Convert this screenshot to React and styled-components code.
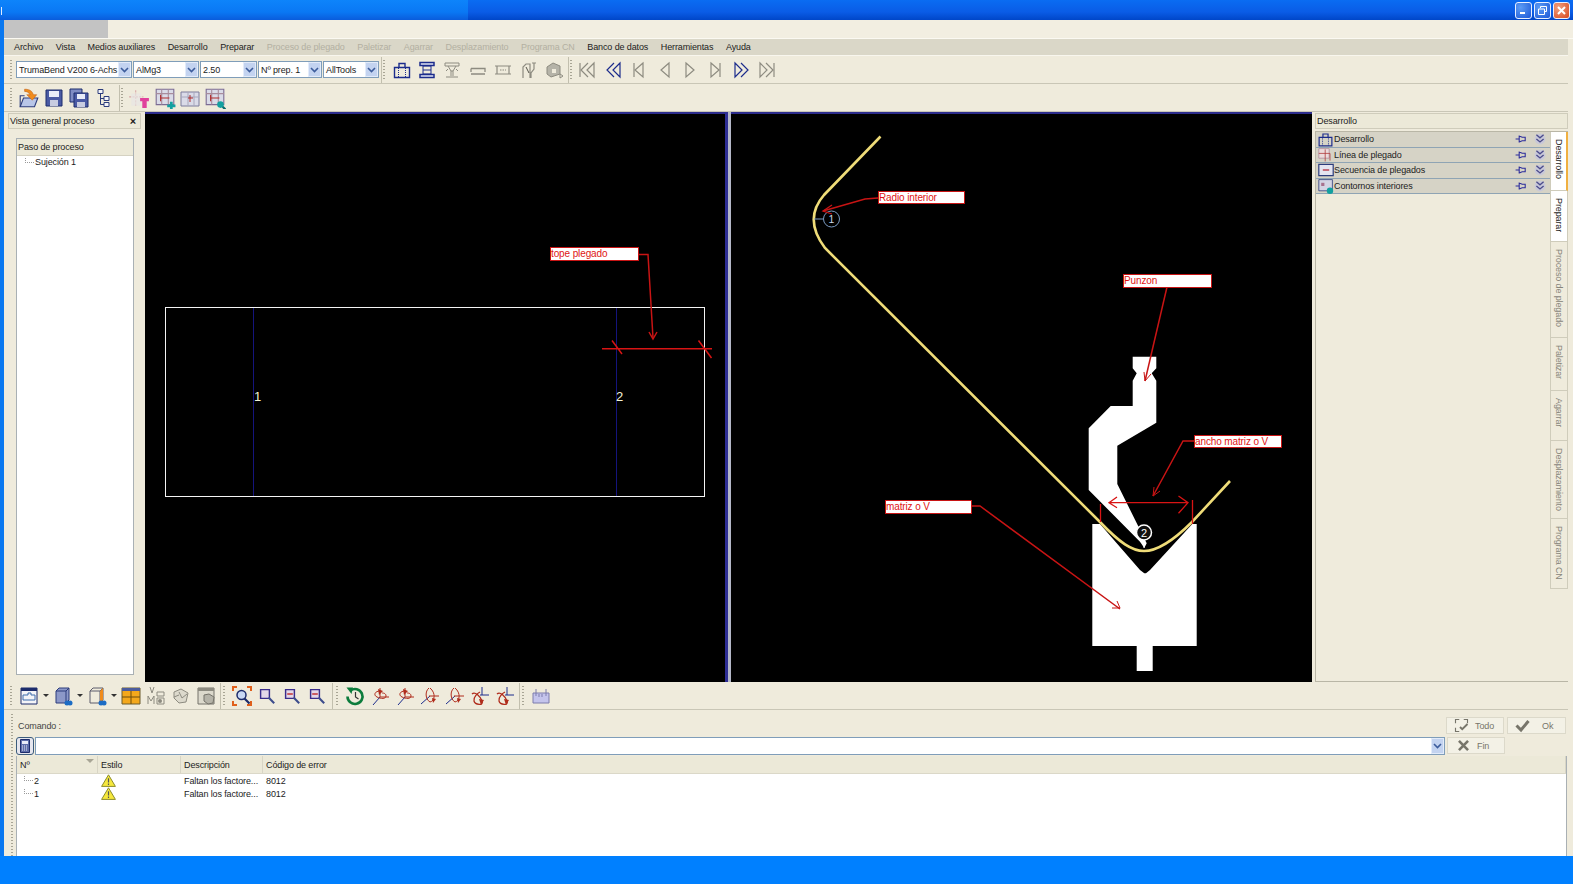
import styled, { createGlobalStyle } from "styled-components";

const GlobalStyle = createGlobalStyle`
  html, body {
    margin: 0;
    padding: 0;
    background: #ece9d8;
  }
  * {
    box-sizing: border-box;
  }
`;

const Page = styled.div`
  width: 1573px;
  height: 884px;
  display: flex;
  flex-direction: column;
  overflow: hidden;
  font-family: "Liberation Sans", Arial, sans-serif;
  font-size: 9px;
  letter-spacing: -0.12px;
  color: #1c1c1c;
`;

const TitleBar = styled.header`
  height: 20px;
  flex: none;
  display: flex;
  align-items: center;
  background: linear-gradient(#0a6cf2, #0a5ce6 60%, #0046c8);
`;

const TitleLeft = styled.div`
  width: 468px;
  height: 100%;
  padding: 7px 0 0 1px;
  background: linear-gradient(#0d84fb, #0a78f4 60%, #0a5cdc);
`;

const Caret = styled.div`
  width: 1px;
  height: 8px;
  background: #dfeaff;
`;

const WinButtons = styled.div`
  margin-left: auto;
  display: flex;
  gap: 2px;
  padding-right: 3px;
`;

const WinButton = styled.div`
  width: 17px;
  height: 17px;
  border: 1px solid #e8f0ff;
  border-radius: 3px;
  display: flex;
  align-items: center;
  justify-content: center;
  background: ${(p) =>
    p.$close
      ? "radial-gradient(circle at 30% 30%, #f0a080, #d8481c)"
      : "radial-gradient(circle at 30% 30%, #5c9cf4, #1c58d8)"};
`;

const Client = styled.div`
  flex: 1;
  min-height: 0;
  display: flex;
  flex-direction: column;
  border-left: 4px solid #0a78f0;
  background: #efebdc;
`;

const TabStrip = styled.div`
  height: 19px;
  flex: none;
  display: flex;
  background: #f2eee1;
  border-bottom: 1px solid #fbf9f2;
`;

const GrayTab = styled.div`
  width: 104px;
  background: #c3c3c3;
`;

const MenuBar = styled.nav`
  height: 17px;
  flex: none;
  width: 1564px;
  display: flex;
  align-items: center;
  gap: 12.6px;
  padding-left: 10px;
  background: #dad7c8;
  border-bottom: 1px solid #f8f6ee;
`;

const MenuItem = styled.span`
  color: ${(p) => (p.$off ? "#b3b0a2" : "#1c1c1c")};
  white-space: nowrap;
`;

const ToolRow = styled.div`
  height: 28px;
  flex: none;
  width: 1564px;
  display: flex;
  align-items: center;
  padding-left: 6px;
  border-bottom: 1px solid #c9c6b6;
`;

const Grip = styled.div`
  width: 2px;
  height: 20px;
  flex: none;
  margin: 0 4px 0 0;
  background: repeating-linear-gradient(#a8a595 0 1px, transparent 1px 3px);
`;

const Sep = styled.div`
  width: 1px;
  height: 26px;
  flex: none;
  margin: 0 ${(p) => p.$gap}px;
  background: #c2bfae;
`;

const Combo = styled.div`
  width: ${(p) => p.$w}px;
  height: 17px;
  flex: none;
  margin-right: 1px;
  display: flex;
  align-items: center;
  justify-content: space-between;
  padding-left: 2px;
  background: #fff;
  border: 1px solid #7f9db9;
  white-space: nowrap;
  overflow: hidden;
`;

const DropArrow = styled.div`
  width: 13px;
  height: 100%;
  flex: none;
  display: flex;
  align-items: center;
  justify-content: center;
  background: #c3d3f0;
  border: 1px solid #e2ebfa;
`;

const Slot = styled.div`
  width: ${(p) => p.$w || 25.4}px;
  height: 24px;
  flex: none;
  display: flex;
  align-items: center;
  justify-content: center;
`;

const Main = styled.main`
  height: 570px;
  flex: none;
  display: flex;
`;

const Side = styled.aside`
  width: 141px;
  flex: none;
  display: flex;
  flex-direction: column;
  padding: 1px 4px 7px 4px;
`;

const PanelHead = styled.div`
  height: 16px;
  flex: none;
  display: flex;
  align-items: center;
  justify-content: space-between;
  padding: 0 4px 1px 1px;
  background: #ece9d8;
  border: 1px solid #cfccbb;
`;

const Close = styled.span`
  font-size: 11px;
  font-weight: bold;
`;

const Tree = styled.div`
  flex: 1;
  margin: 9px 7px 0 8px;
  display: flex;
  flex-direction: column;
  background: #fff;
  border: 1px solid #a9b0b4;
`;

const TreeHead = styled.div`
  height: 17px;
  flex: none;
  display: flex;
  align-items: center;
  padding: 0 0 1px 1px;
  background: #ece9d8;
  border-bottom: 1px solid #d5d2c2;
`;

const TreeRow = styled.div`
  height: 12px;
  display: flex;
  align-items: center;
  padding-left: 8px;
`;

const Dots = styled.span`
  width: 9px;
  height: 5px;
  margin: -4px 1px 0 0;
  border-left: 1px dotted #9a9a9a;
  border-bottom: 1px dotted #9a9a9a;
`;

const Canvas = styled.svg`
  display: block;
  flex: none;
  width: ${(p) => p.$w}px;
  height: 570px;
  background: #000;
  border-top: 2px solid #2c2c8c;
`;

const Splitter = styled.div`
  width: 6px;
  flex: none;
  background: linear-gradient(90deg, #2e2e94 0 3px, #b4b8c8 3px 6px);
`;

const RightPanel = styled.aside`
  flex: 1;
  min-width: 0;
  display: flex;
  flex-direction: column;
  padding: 1px 5px 0 3px;
`;

const RightBody = styled.div`
  flex: 1;
  display: flex;
  margin-top: 2px;
  border: 1px solid #b9b6a6;
  border-right: none;
`;

const Rows = styled.div`
  flex: 1;
  min-width: 0;
`;

const FeatureRow = styled.div`
  height: 15.6px;
  display: flex;
  align-items: center;
  gap: 0;
  padding-left: 1px;
  background: #d6d3c6;
  border-bottom: 1px solid #8fa4b4;
`;

const RowTail = styled.div`
  margin-left: auto;
  display: flex;
  gap: 7px;
  padding-right: 4px;
`;

const VTabs = styled.div`
  width: 18px;
  flex: none;
  display: flex;
  flex-direction: column;
`;

const VTab = styled.div`
  height: ${(p) => p.$h}px;
  writing-mode: vertical-rl;
  display: flex;
  align-items: center;
  justify-content: flex-start;
  padding-top: 7px;
  white-space: nowrap;
  color: ${(p) => (p.$on ? "#1c1c1c" : "#87857a")};
  background: ${(p) => (p.$on ? "#fff" : "#efebdc")};
  border-bottom: 1px solid #cfccbb;
  border-left: 1px solid #cfccbb;
  border-right: ${(p) => (p.$active ? "2px solid #f0b040" : "1px solid #cfccbb")};
`;

const CommandArea = styled.section`
  flex: 1;
  min-height: 0;
  display: flex;
  width: 1563px;
  padding-left: 7px;
`;

const GripColumn = styled.div`
  width: 2px;
  margin: 4px 3px 0 0;
  background: repeating-linear-gradient(#a8a595 0 1px, transparent 1px 3px);
`;

const CommandBody = styled.div`
  flex: 1;
  min-width: 0;
  display: flex;
  flex-direction: column;
`;

const CommandTop = styled.div`
  height: 27px;
  flex: none;
  display: flex;
  align-items: flex-start;
  padding: 7px 1px 0 2px;
`;

const CommandLabel = styled.span`
  margin-right: auto;
  padding-top: 4px;
  color: #444;
`;

const ActionButton = styled.div`
  width: ${(p) => p.$w || 58}px;
  height: 17px;
  margin-left: ${(p) => p.$ml || 0}px;
  display: flex;
  align-items: center;
  gap: ${(p) => p.$gap}px;
  padding-left: ${(p) => p.$pad || 7}px;
  color: #77756a;
  background: #f3f1e6;
  border: 1px solid #dcd9ca;
`;

const CommandInputRow = styled.div`
  height: 18px;
  flex: none;
  display: flex;
  align-items: stretch;
`;

const CalcButton = styled.div`
  width: 18px;
  flex: none;
  margin-right: 1px;
  display: flex;
  align-items: center;
  justify-content: center;
  background: #e6e6ee;
  border: 1px solid #3c5c7c;
  border-radius: 3px;
`;

const CommandInput = styled.div`
  flex: 1;
  display: flex;
  justify-content: flex-end;
  background: #fff;
  border: 1px solid #7f9db9;
`;

const FinSpace = styled.div`
  width: 122px;
  flex: none;
  padding-left: 2px;
`;

const Table = styled.div`
  flex: 1;
  min-height: 0;
  margin-top: 1px;
  background: #fff;
  border-left: 1px solid #a9b0b4;
  border-right: 1px solid #a9b0b4;
`;

const TableRow = styled.div`
  display: grid;
  grid-template-columns: 81px 83px 82px 1fr;
  height: ${(p) => p.$h || 13}px;
  align-items: center;
`;

const TableHead = styled(TableRow)`
  background: #ece9d8;
  border-bottom: 1px solid #dbd8c8;
`;

const HeadCell = styled.div`
  position: relative;
  height: 100%;
  display: flex;
  align-items: center;
  padding-left: 3px;
  border-right: 1px solid #d8d5c5;
`;

const SortMark = styled.span`
  position: absolute;
  right: 3px;
  top: 3px;
  border: 4px solid transparent;
  border-top: 4px solid #a8a595;
`;

const Cell = styled.div`
  display: flex;
  align-items: center;
  padding-left: ${(p) => p.$pad || 3}px;
  white-space: nowrap;
`;

const StatusBar = styled.footer`
  height: 28px;
  flex: none;
  background: #0080ff;
`;

const IconSvg = styled.svg`
  display: block;
  flex: none;
`;

const Ico = ({ s = 20, children }) => (
  <IconSvg width={s} height={s} viewBox="0 0 20 20" fill="none">
    {children}
  </IconSvg>
);

const NAVY = "#1c2c8c";
const GREY = "#8d8b80";
const RED = "#b02c1c";

const Chevron = ({ c = "#3c5c9c" }) => (
  <svg width="9" height="6" viewBox="0 0 9 6">
    <path d="M1 1l3.5 3.5L8 1" stroke={c} strokeWidth="1.6" fill="none" />
  </svg>
);

const Nav = ({ dir = 1, bar, count = 1, on }) => {
  const c = on ? NAVY : GREY;
  return (
    <Ico>
      <g transform={dir < 0 ? "translate(20 0) scale(-1 1)" : undefined} stroke={c} strokeWidth="1.2" fill="none">
        <path d={count === 2 ? "M4 3l7 7-7 7z" : "M6 3l8 7-8 7z"} />
        {count === 2 && <path d="M10 3l7 7-7 7" />}
        {bar && <path d={count === 2 ? "M18 3v14" : "M15 3v14"} />}
      </g>
    </Ico>
  );
};

const SheetIcon = ({ s = 20 }) => (
  <Ico s={s}>
    <path d="M2.500 7.500h15v10h-15zM7 7.500V3.500h6v4" stroke={NAVY} strokeWidth="1.400" />
    <path d="M6.500 8v9M13.500 8v9" stroke={NAVY} strokeDasharray="1 1" />
  </Ico>
);
const press = (
  <Ico>
    <path d="M3 2.500h14v3H3zM3 14.500h14v3H3z" stroke={NAVY} strokeWidth="1.500" fill="#dfe3f4" />
    <path d="M6 6h8v8H6zM6 10h8" stroke={NAVY} />
  </Ico>
);
const anvil = (
  <Ico>
    <path d="M3 3h14v3H3zM6 6l3 5h2l3-5M9 11v5M11 11v5M4 17h12" stroke={GREY} />
    <path d="M6 9l-2 2M14 9l2 2" stroke={GREY} />
  </Ico>
);
const rail = (
  <Ico>
    <path d="M3 8.500h14v3.500M3 12V8.500M3 14h14" stroke={GREY} strokeWidth="1.300" />
  </Ico>
);
const slotIcon = (
  <Ico>
    <path d="M2 6h16M4 6v8h12V6M2 14h16" stroke={GREY} strokeWidth="1.200" />
    <path d="M7 10h6" stroke={GREY} strokeDasharray="1.500 1" />
  </Ico>
);
const machine = (
  <Ico>
    <path d="M4 18V7l3-3h4v14M13 3h4M15 3v6l-3 4v5" stroke={GREY} strokeWidth="1.200" />
    <path d="M7 7l3 6" stroke="#55534a" />
  </Ico>
);
const ncFolder = (
  <Ico>
    <path d="M3 7l6-4 7 3v8l-9 3-4-3z" fill="#b5b3a8" stroke={GREY} />
    <path d="M8 9h4v4H8z" fill="#efebdc" />
    <path d="M16 14l3 2-3 2z" stroke={GREY} />
  </Ico>
);

const openFolder = (
  <Ico s={22}>
    <path d="M2 18l3-8h13l-3 8z" fill="#b9c6e8" stroke="#2c3c7c" />
    <path d="M2 18V8h4" stroke="#2c3c7c" />
    <path d="M6 2c5 0 7 2 8 5h3l-4 5-5-5h3c-1-2-3-3-5-3z" fill="#f08c1c" stroke="#c05c0c" strokeWidth=".5" />
  </Ico>
);
const floppy = (
  <Ico>
    <path d="M2 2h16v16H2z" fill="#4a5aa4" stroke="#1c2c6c" />
    <path d="M5 3h10v6H5z" fill="#e8ecf8" />
    <path d="M6 12h8v6H6z" fill="#c8cce0" />
  </Ico>
);
const floppies = (
  <Ico>
    <path d="M1 1h12v13H1z" fill="#7f8cc4" stroke="#1c2c6c" />
    <path d="M5 5h14v14H5z" fill="#4a5aa4" stroke="#1c2c6c" />
    <path d="M8 6h8v5H8z" fill="#e8ecf8" />
    <path d="M8 14h8v5H8z" fill="#c8cce0" />
  </Ico>
);
const treeIcon = (
  <Ico>
    <path d="M3 1.500h5v4H3zM9 8.500h5v4H9zM9 14.500h5v4H9z" fill="#f4f4f8" stroke="#2c3c7c" />
    <path d="M5.500 5.500V16.500H9M5.500 10.500H9" stroke="#2c3c7c" />
  </Ico>
);
const pinkT = (
  <Ico s={22}>
    <path d="M1 9h13M7 3v14" stroke="#d8a8a8" strokeDasharray="2 1" />
    <path d="M3 6h9v11H3z" fill="#e8e6e4" opacity=".7" />
    <path d="M11 10h8v3h-2v6h-4v-6h-2z" fill="#e0409c" />
  </Ico>
);
const gridBadge = (badge) => (
  <Ico s={22}>
    <path d="M2 2h16v14H2z" fill="#dadbe8" stroke="#7c6c94" />
    <path d="M2 6h16M7 2v14M13 2v14" stroke="#a88c9c" />
    <path d="M6 7v6M6 10h8" stroke="#b02c2c" />
    {badge === "plus" && <path d="M12 16h2.500v-2.500h2.500V16h2.500v2.500H17V21h-2.500v-2.500H12z" fill="#12a0a0" />}
    {badge === "lens" && <circle cx="15" cy="16" r="3" fill="#12a0a0" />}
    {badge === "lens" && <path d="M17 18l3 3" stroke="#0c6c6c" strokeWidth="2" />}
  </Ico>
);
const gridPlain = (
  <Ico>
    <path d="M1 4h18v14H1z" fill="#dadbe8" stroke="#7c7c9c" />
    <path d="M1 9h18M8 4v14M14 4v14" stroke="#a8a8bc" />
    <path d="M10 7v7M8 10h5" stroke="#b02c2c" />
  </Ico>
);

const windowIcon = (
  <Ico>
    <path d="M2 2h16v16H2z" fill="#f4f4f8" stroke="#1c2c6c" />
    <path d="M2 2h16v3H2z" fill="#1c2c6c" />
    <path d="M4 9h5V7h3v2h4v5H4z" stroke="#3c6cac" />
  </Ico>
);
const cube = (
  <Ico>
    <path d="M3 5l3-3h10v12l-3 3H3z" fill="#8c98c8" stroke="#2c3c7c" />
    <path d="M3 5h10v12M13 5l3-3" stroke="#2c3c7c" />
    <circle cx="14" cy="17" r="2.500" fill="#1c6cc4" />
    <circle cx="17" cy="17" r="2.500" fill="#1c6cc4" />
  </Ico>
);
const wireCube = (
  <Ico>
    <path d="M3 5l3-3h10v12l-3 3H3zM3 5h10v12M13 5l3-3" stroke="#5c5c6c" />
    <path d="M13 5l3-3v12l-3 3z" fill="#f08c1c" />
    <circle cx="14" cy="17" r="2.500" fill="#1c6cc4" />
    <circle cx="17" cy="17" r="2.500" fill="#1c6cc4" />
  </Ico>
);
const orangeGrid = (
  <Ico>
    <path d="M1 2h18v16H1z" fill="#f4a81c" stroke="#6c5c2c" />
    <path d="M1 2h18v3H1z" fill="#4c5c9c" />
    <path d="M10 5v13M1 11h18" stroke="#6c4c0c" />
  </Ico>
);
const vmIcon = (
  <Ico>
    <path d="M4 1l2 6 2-6M2 18v-8l3 5 3-5v8" stroke={GREY} />
    <path d="M11 6h7v4h-7zM11 12h7v6h-7z" stroke={GREY} />
    <circle cx="14" cy="15" r="2" fill={GREY} />
  </Ico>
);
const greyShape = (
  <Ico>
    <path d="M3 6l7-3 7 4-2 9-7 1-5-5z" stroke={GREY} fill="#dcd9cc" />
    <path d="M8 6l3 6 5-4M3 11l5-2" stroke={GREY} />
  </Ico>
);
const greyWindow = (
  <Ico>
    <path d="M2 2h16v16H2z" fill="#dcd9cc" stroke="#75736a" />
    <path d="M2 2h16v3H2z" fill="#8d8b80" />
    <path d="M8 9l5-1 5 3-1 6-5 1-4-3z" fill="#b5b3a8" stroke="#75736a" />
  </Ico>
);
const zoomAll = (
  <Ico>
    <path d="M1 5V1h4M15 1h4v4M1 15v4h4M19 15v4h-4" stroke="#e0601c" strokeWidth="2" />
    <circle cx="9.500" cy="9" r="4.500" fill="#c8d8f4" stroke="#1c2c6c" strokeWidth="1.500" />
    <path d="M12.500 12.500l5 5" stroke="#1c2c6c" strokeWidth="2.200" />
  </Ico>
);
const lens = (mark) => (
  <Ico s={16}>
    <path d="M2 2h11v11H2z" fill="#e4d8e8" stroke="#3a2c8c" strokeWidth="1.800" />
    <path d="M12 12l7 7" stroke="#3c4c8c" strokeWidth="2.600" />
    <path d={mark} stroke="#c02c2c" strokeWidth="1.800" />
  </Ico>
);
const historyIcon = (
  <Ico>
    <path d="M5.500 4.500a7.500 7.500 0 1 1-3 6" stroke="#0c7c3c" strokeWidth="2.600" />
    <path d="M1.500 1.500h6.500l-1.500 6.500z" fill="#0c7c3c" />
    <path d="M10.500 6v5l3 2" stroke="#333" strokeWidth="1.200" />
  </Ico>
);
// rotation axis buttons: navy axis, red turning direction
const axisLoop = (
  <>
    <path d="M10 2v9M10 11h9" stroke={RED} />
    <path d="M10 11l-7 8" stroke={NAVY} />
    <path d="M10 5c-5 0-7 4-3 6s9 2 9-1-3-3-4-3" stroke={RED} />
    <path d="M8 3l5 2-4 4z" fill={RED} />
  </>
);
const axisRing = (
  <>
    <path d="M1 18l9-8" stroke={NAVY} />
    <path d="M9 10h10" stroke={RED} />
    <path d="M9 2c-4 3-4 11 1 14 5-1 6-9 0-14" stroke={RED} />
    <path d="M12 12l4 1-3 4z" fill={RED} />
  </>
);
const axisEight = (
  <>
    <path d="M10 9h9M12 1v8" stroke={NAVY} />
    <path d="M2 8c3-3 8 2 10 7s-7 4-8 0 4-8 6-9" stroke={RED} strokeWidth="1.300" />
    <path d="M9 13l5 1-3 5z" fill={RED} />
  </>
);
const ruler = (
  <Ico>
    <path d="M2 7h16v10H2z" fill="#c4c4ec" stroke="#7c7cac" />
    <path d="M5 3v7M15 3v7M8 8v3M11 8v3" stroke="#7c7cac" />
  </Ico>
);
const warning = (
  <IconSvg width="15" height="13" viewBox="0 0 15 13">
    <path d="M7.500.8L14.400 12.400H.6z" fill="#f6e83c" stroke="#8c8c2c" />
    <path d="M7.500 4.200v4.400M7.500 9.600v1.400" stroke="#555" strokeWidth="1.200" />
  </IconSvg>
);

const Pin = () => (
  <Ico s={12}>
    <path d="M1 10h6M7 4v12M7 5l5 2h5v6h-5l-5 2" stroke="#2c2c9c" strokeWidth="1.800" />
  </Ico>
);
const DoubleDown = () => (
  <Ico s={12}>
    <circle cx="10" cy="10" r="9" fill="#c8c8d8" />
    <path d="M4 3l6 5 6-5M4 10l6 5 6-5" stroke="#4c4c8c" strokeWidth="2.200" />
  </Ico>
);

const Caret3 = () => (
  <Slot $w={9}>
    <svg width="6" height="3"><path d="M0 0h6L3 3z" fill="#333" /></svg>
  </Slot>
);

const featureIcons = [
  <SheetIcon key="d" s={17} />,
  <Ico key="l" s={16}>
    <path d="M1 2h13v12H1z" fill="#ecdcdc" stroke="#b08c9c" />
    <path d="M1 8h14M9 3v15M15 8v9" stroke="#b03c3c" />
  </Ico>,
  <Ico key="s" s={16}>
    <path d="M1 3h18v14H1z" fill="#e4e4f0" stroke="#2c3c7c" strokeWidth="1.500" />
    <path d="M6 10h8" stroke="#b01c2c" strokeWidth="1.500" />
  </Ico>,
  <Ico key="c" s={16}>
    <path d="M1 2h17v14H1z" fill="#d4d4e4" stroke="#2c3c7c" />
    <path d="M4 6h4v4H4z" fill="#a8708c" />
    <circle cx="15" cy="16" r="4" fill="#12a0a0" />
  </Ico>,
];

const features = ["Desarrollo", "Línea de plegado", "Secuencia de plegados", "Contornos interiores"];

const menu = [
  ["Archivo"],
  ["Vista"],
  ["Medios auxiliares"],
  ["Desarrollo"],
  ["Preparar"],
  ["Proceso de plegado", true],
  ["Paletizar", true],
  ["Agarrar", true],
  ["Desplazamiento", true],
  ["Programa CN", true],
  ["Banco de datos"],
  ["Herramientas"],
  ["Ayuda"],
];

const combos = [
  ["TrumaBend V200 6-Achs", 116],
  ["AlMg3", 66],
  ["2.50", 57],
  ["Nº prep. 1", 64],
  ["AllTools", 56],
];

const tabs = [
  ["Desarrollo", 59, true, true],
  ["Preparar", 51, true],
  ["Proceso de plegado", 96],
  ["Paletizar", 53],
  ["Agarrar", 50],
  ["Desplazamiento", 78],
  ["Programa CN", 70],
];

const Callout = ({ x, y, w, h = 13, children, line }) => (
  <g>
    <polyline points={line} stroke="#c81414" strokeWidth="1.500" fill="none" />
    <rect x={x + 0.5} y={y + 0.5} width={w} height={h} fill="#fff" stroke="#c81414" />
    <text x={x + 1} y={y + 10} fontSize="10" fontFamily="Liberation Sans" fill="#e01414">
      {children}
    </text>
  </g>
);

const BendLeft = () => (
  <Canvas $w={580} viewBox="145 114 580 568">
    <rect x="165.5" y="307.5" width="539" height="189" stroke="#f4f4f4" fill="none" />
    <path d="M253.5 308v188M616.5 308v188" stroke="#14147c" />
    <text x="254" y="401" fontSize="13" fontFamily="Liberation Sans" fill="#f4f4d8">1</text>
    <text x="616" y="401" fontSize="13" fontFamily="Liberation Sans" fill="#f4f4d8">2</text>
    <path d="M602 348.7h110M612 340.5l10 13.500M698.5 340.5l13 17.500" stroke="#d81414" strokeWidth="1.500" />
    <Callout x={550} y={247} w={88} line="639,254.5 648,254.5 653,338">tope plegado</Callout>
    <path d="M649 332l4 7 4-7" stroke="#c81414" strokeWidth="1.500" fill="none" />
  </Canvas>
);

const BendRight = () => (
  <Canvas $w={581} viewBox="731 114 581 568">
    <path
      d="M1132.7 356.7h23.600v11.600l-4.600 5 4.600 7.400v42l-39 23v38.300l29.400 59.300-2.400 4.700-4.300-6.300-51.300-51.700v-61.700l22-22.300h22v-25.300l4-7.400-4-5z"
      fill="#fff"
    />
    <path
      d="M1092.3 524h7.700l40 46 4.300 3.300h1.700l4-3.300 42.300-46h4.400v122h-44v25h-16v-25h-44.400z"
      fill="#fff"
    />
    <path
      d="M880.5 136.5L824 195Q803 219 825 248L1100 522C1120 543 1132 551 1144 551C1156 551 1172 542 1192 522L1230 481"
      stroke="#efdc78"
      strokeWidth="2.600"
      fill="none"
    />
    <path d="M1109.5 502.7h78M1117 497l-8 5.700 8 5M1178.5 496l9.500 6.700-9.500 10.600M1100.5 504v18M1192.5 500v24" stroke="#d81414" strokeWidth="1.300" fill="none" />
    <circle cx="831.5" cy="219" r="8" stroke="#7c9cc4" fill="#000" />
    <path d="M823 219h-9" stroke="#7c9cc4" />
    <text x="828.5" y="223" fontSize="10.5" fontFamily="Liberation Sans" fill="#c8d8e8">1</text>
    <circle cx="1144" cy="532.5" r="7.500" stroke="#fff" strokeWidth="1.500" fill="#111" />
    <path d="M1144 540v8" stroke="#fff" />
    <text x="1141" y="537" fontSize="11" fontFamily="Liberation Sans" fill="#fff">2</text>

    <Callout x={878} y={191} w={86} h={12} line="878,198 865,199 823,211">Radio interior</Callout>
    <path d="M832 205l-9 6 9 3" stroke="#c81414" strokeWidth="1.300" fill="none" />
    <Callout x={1123} y={274} w={88} line="1167,287 1145,381">Punzon</Callout>
    <path d="M1144 372l1 9 6-7" stroke="#c81414" fill="none" />
    <Callout x={1194} y={435} w={87} h={12} line="1194,441 1183,441 1153,496">ancho matriz o V</Callout>
    <path d="M1154 487l-1 9 7-5" stroke="#c81414" fill="none" />
    <Callout x={885} y={500} w={86} line="971,506 980,506 1120,609">matriz o V</Callout>
    <path d="M1112 608h8l-3-7" stroke="#c81414" fill="none" />
  </Canvas>
);

export default function App() {
  return (
    <Page>
      <GlobalStyle />
      <TitleBar>
        <TitleLeft>
          <Caret />
        </TitleLeft>
        <WinButtons>
          <WinButton>
            <svg width="9" height="9" viewBox="0 0 9 9"><path d="M1 7h5" stroke="#fff" strokeWidth="2" /></svg>
          </WinButton>
          <WinButton>
            <svg width="11" height="11" viewBox="0 0 11 11"><path d="M3.500 3V1.500h6v5H8M1.500 4h6v5.500h-6z" stroke="#fff" fill="none" /></svg>
          </WinButton>
          <WinButton $close>
            <svg width="11" height="11" viewBox="0 0 11 11"><path d="M2 2l7 7M9 2l-7 7" stroke="#fff" strokeWidth="2" /></svg>
          </WinButton>
        </WinButtons>
      </TitleBar>

      <Client>
        <TabStrip>
          <GrayTab />
        </TabStrip>

        <MenuBar>
          {menu.map(([label, off]) => (
            <MenuItem key={label} $off={off}>{label}</MenuItem>
          ))}
        </MenuBar>

        <ToolRow>
          <Grip />
          {combos.map(([label, w]) => (
            <Combo key={label} $w={w}>
              {label}
              <DropArrow><Chevron /></DropArrow>
            </Combo>
          ))}
          <Sep $gap={1} />
          <Grip />
          {[<SheetIcon key="s" />, press, anvil, rail, slotIcon, machine, ncFolder].map((icon, i) => (
            <Slot key={i}>{icon}</Slot>
          ))}
          <Sep $gap={1} />
          <Grip />
          <Slot><Nav dir={-1} bar count={2} /></Slot>
          <Slot><Nav dir={-1} count={2} on /></Slot>
          <Slot><Nav dir={-1} bar /></Slot>
          <Slot><Nav dir={-1} /></Slot>
          <Slot><Nav /></Slot>
          <Slot><Nav bar /></Slot>
          <Slot><Nav count={2} on /></Slot>
          <Slot><Nav bar count={2} /></Slot>
        </ToolRow>

        <ToolRow>
          <Grip />
          {[openFolder, floppy, floppies, treeIcon].map((icon, i) => (
            <Slot key={i}>{icon}</Slot>
          ))}
          <Sep $gap={1} />
          <Grip />
          {[pinkT, gridBadge("plus"), gridPlain, gridBadge("lens")].map((icon, i) => (
            <Slot key={i}>{icon}</Slot>
          ))}
        </ToolRow>

        <Main>
          <Side>
            <PanelHead>
              Vista general proceso
              <Close>×</Close>
            </PanelHead>
            <Tree>
              <TreeHead>Paso de proceso</TreeHead>
              <TreeRow><Dots />Sujeción 1</TreeRow>
            </Tree>
          </Side>
          <BendLeft />
          <Splitter />
          <BendRight />
          <RightPanel>
            <PanelHead>Desarrollo</PanelHead>
            <RightBody>
              <Rows>
                {features.map((label, i) => (
                  <FeatureRow key={label}>
                    <Slot $w={17}>{featureIcons[i]}</Slot>
                    {label}
                    <RowTail>
                      <Pin />
                      <DoubleDown />
                    </RowTail>
                  </FeatureRow>
                ))}
              </Rows>
              <VTabs>
                {tabs.map(([label, h, on, active]) => (
                  <VTab key={label} $h={h} $on={on} $active={active}>{label}</VTab>
                ))}
              </VTabs>
            </RightBody>
          </RightPanel>
        </Main>

        <ToolRow>
          <Grip />
          <Slot $w={25}>{windowIcon}</Slot>
          <Caret3 />
          <Slot $w={25}>{cube}</Slot>
          <Caret3 />
          <Slot $w={25}>{wireCube}</Slot>
          <Caret3 />
          {[orangeGrid, vmIcon, greyShape, greyWindow].map((icon, i) => (
            <Slot key={i} $w={25}>{icon}</Slot>
          ))}
          <Sep $gap={2} />
          <Grip />
          {[zoomAll, lens(), lens("M4 7.500h7"), lens("M4 7.500h7")].map((icon, i) => (
            <Slot key={i} $w={25}>{icon}</Slot>
          ))}
          <Sep $gap={3} />
          <Grip />
          <Slot $w={25}>{historyIcon}</Slot>
          {[axisLoop, axisLoop, axisRing, axisRing, axisEight, axisEight].map((icon, i) => (
            <Slot key={i} $w={25}><Ico>{icon}</Ico></Slot>
          ))}
          <Sep $gap={2} />
          <Grip />
          <Slot $w={25}>{ruler}</Slot>
        </ToolRow>

        <CommandArea>
          <GripColumn />
          <CommandBody>
            <CommandTop>
              <CommandLabel>Comando :</CommandLabel>
              <ActionButton $gap={6}>
                <Ico s={15}>
                  <path d="M2 7V2h5M13 2h5v5M2 13v5h5" stroke="#77756a" strokeWidth="1.500" />
                  <path d="M8 12l3 3 7-7" stroke="#77756a" strokeWidth="2.500" />
                </Ico>
                Todo
              </ActionButton>
              <ActionButton $w={59} $ml={3} $gap={12}>
                <Ico s={15}>
                  <path d="M2 10l6 6L18 4" stroke="#77756a" strokeWidth="4" />
                </Ico>
                Ok
              </ActionButton>
            </CommandTop>
            <CommandInputRow>
              <CalcButton>
                <svg width="10" height="14" viewBox="0 0 10 14">
                  <path d="M.5.5h9v13h-9z" fill="#5c6ca8" stroke="#1c2c6c" />
                  <path d="M2 2h6v3H2z" fill="#e8ecf8" />
                  <path d="M2 7h6M2 9h6M2 11h6" stroke="#e8ecf8" strokeDasharray="1 1" />
                </svg>
              </CalcButton>
              <CommandInput>
                <DropArrow><Chevron /></DropArrow>
              </CommandInput>
              <FinSpace>
                <ActionButton $gap={7} $pad={9}>
                  <Ico s={13}>
                    <path d="M3 3l14 14M17 3L3 17" stroke="#77756a" strokeWidth="4" />
                  </Ico>
                  Fin
                </ActionButton>
              </FinSpace>
            </CommandInputRow>
            <Table>
              <TableHead $h={18}>
                <HeadCell>Nº<SortMark /></HeadCell>
                <HeadCell>Estilo</HeadCell>
                <HeadCell>Descripción</HeadCell>
                <HeadCell>Código de error</HeadCell>
              </TableHead>
              {["2", "1"].map((n) => (
                <TableRow key={n}>
                  <Cell $pad={7}><Dots />{n}</Cell>
                  <Cell>{warning}</Cell>
                  <Cell>Faltan los factore...</Cell>
                  <Cell>8012</Cell>
                </TableRow>
              ))}
            </Table>
          </CommandBody>
        </CommandArea>
      </Client>

      <StatusBar />
    </Page>
  );
}
